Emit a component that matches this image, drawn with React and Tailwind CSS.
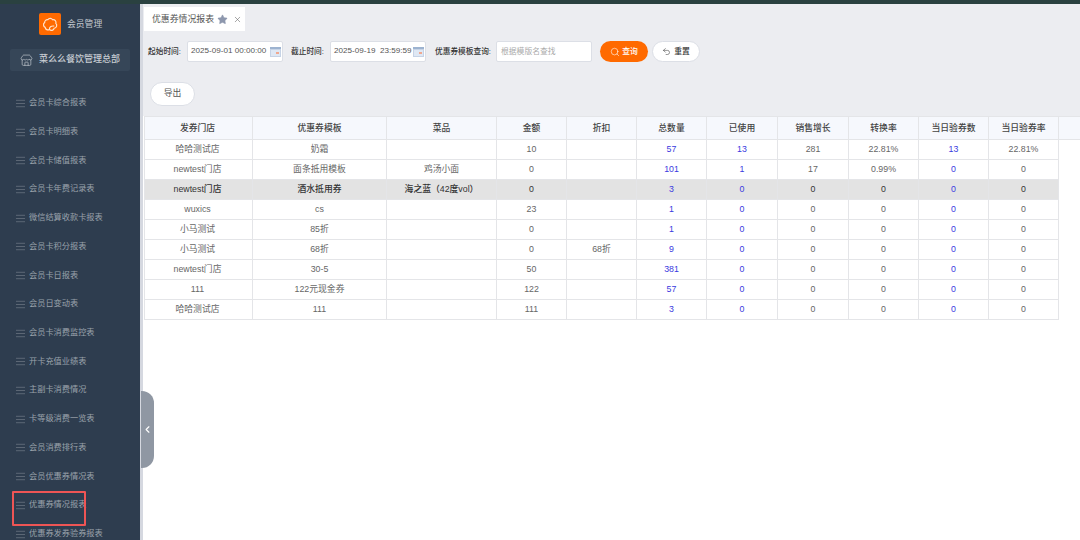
import React from "react";
import { Store, Search, Undo2, X, Star, AlignJustify, ChevronLeft } from "lucide-react";

const FONT = "font-['Liberation_Sans','Noto_Sans_CJK_SC',sans-serif]";

const menuItems = [
  "会员卡综合报表",
  "会员卡明细表",
  "会员卡储值报表",
  "会员卡年费记录表",
  "微信结算收款卡报表",
  "会员卡积分报表",
  "会员卡日报表",
  "会员日变动表",
  "会员卡消费监控表",
  "开卡充值业绩表",
  "主副卡消费情况",
  "卡等级消费一览表",
  "会员消费排行表",
  "会员优惠券情况表",
  "优惠券情况报表",
  "优惠券发券验券报表",
];

const columns = [
  { label: "发券门店", width: "w-[108px]" },
  { label: "优惠券模板", width: "w-[134px]" },
  { label: "菜品", width: "w-[110px]" },
  { label: "金额", width: "w-[70px]" },
  { label: "折扣", width: "w-[70px]" },
  { label: "总数量", width: "w-[70px]" },
  { label: "已使用", width: "w-[71px]" },
  { label: "销售增长", width: "w-[71px]" },
  { label: "转换率", width: "w-[70px]" },
  { label: "当日验券数", width: "w-[70px]" },
  { label: "当日验券率", width: "w-[70px]" },
];

const rows = [
  ["哈哈测试店", "奶霜", "", "10", "", "57", "13", "281", "22.81%", "13", "22.81%"],
  ["newtest门店", "面条抵用模板", "鸡汤小面", "0", "", "101", "1", "17", "0.99%", "0", "0"],
  ["newtest门店", "酒水抵用券", "海之蓝（42度vol）", "0", "", "3", "0", "0", "0", "0", "0"],
  ["wuxics", "cs", "", "23", "", "1", "0", "0", "0", "0", "0"],
  ["小马测试", "85折", "", "0", "", "1", "0", "0", "0", "0", "0"],
  ["小马测试", "68折", "", "0", "68折", "9", "0", "0", "0", "0", "0"],
  ["newtest门店", "30-5", "", "50", "", "381", "0", "0", "0", "0", "0"],
  ["111", "122元现金券", "", "122", "", "57", "0", "0", "0", "0", "0"],
  ["哈哈测试店", "111", "", "111", "", "3", "0", "0", "0", "0", "0"],
];

const linkCols = [5, 6, 9];

const Logo = () => (
  <div className="w-[22px] h-[22px] rounded-[2px] bg-[#ff6a00] flex items-center justify-center">
    <svg width="17" height="17" viewBox="0 0 16 16" fill="none" stroke="#ffe3cc" strokeWidth="1.1">
      <path d="M5.500 3.500a2.600 2.600 0 0 1 4.500 0a2.600 2.600 0 0 1 3 3.500a2.600 2.600 0 0 1-1.500 4.500a2.600 2.600 0 0 1-4.500 1.200a2.600 2.600 0 0 1-4-2a2.600 2.600 0 0 1-.5-4.500a2.600 2.600 0 0 1 3-2.700z" />
      <path d="M7 12.700c-.3-2 1.500-3.700 4.500-3.200" />
    </svg>
  </div>
);

const CalendarIcon = () => (
  <svg width="11" height="10" viewBox="0 0 11 10" className="shrink-0">
    <rect width="11" height="10" fill="#c6d3e6" />
    <rect width="11" height="2" fill="#9db3d0" />
    <rect x="1" y="3" width="9" height="6" fill="#dfe8f4" />
    <rect x="6" y="5" width="3" height="2" fill="#f0a890" />
  </svg>
);

const Sidebar = () => (
  <aside className="w-[140px] shrink-0 bg-[#2e3d4f] flex flex-col overflow-hidden">
    <div className="flex items-start pl-[39px] gap-[6px] pt-[9px] h-[45px] shrink-0">
      <Logo />
      <span className="text-[8.800px] leading-[22px] text-[#c3c8ce]">会员管理</span>
    </div>
    <div className="mx-[10px] h-[22px] rounded-[2px] bg-[#364658] flex items-center pl-[10px] gap-[6px] shrink-0">
      <Store size={13} strokeWidth={1.200} className="text-[#c8cdd3]" />
      <span className="text-[9px] font-medium text-[#c8cdd3]">菜么么餐饮管理总部</span>
    </div>
    <ul className="pt-[18px]">
      {menuItems.map((item) => (
        <li key={item} className="h-[28.730px] flex items-center pl-[15px] gap-[3px] text-[8.200px] text-[#9aa2ab] whitespace-nowrap">
          <AlignJustify size={11} strokeWidth={1.100} className="text-[#8a929c] shrink-0" />
          <span>{item}</span>
        </li>
      ))}
    </ul>
  </aside>
);

const DateInput = ({ value }) => (
  <div className="w-[96px] h-[21px] bg-white border border-[#dcdfe6] rounded-[2px] flex items-center justify-between pl-[3px] pr-[1px] text-[8.100px] font-normal text-[#555]">
    <span className="whitespace-pre">{value}</span>
    <CalendarIcon />
  </div>
);

const Filters = () => (
  <div className="flex items-center h-[21px] mt-[10px] pl-[4px] text-[7.700px] text-[#333] font-medium whitespace-nowrap">
    <span className="w-[39px]">起始时间:</span>
    <DateInput value="2025-09-01 00:00:00" />
    <span className="ml-[8px] w-[39px]">截止时间:</span>
    <DateInput value="2025-09-19  23:59:59" />
    <span className="ml-[9px] w-[61px]">优惠券模板查询:</span>
    <div className="w-[96px] h-[21px] bg-white border border-[#dcdfe6] rounded-[2px] flex items-center pl-[4px] text-[7.800px] font-normal text-[#aaa]">
      根据模版名查找
    </div>
    <button className="ml-[8px] w-[48px] h-[21px] rounded-full bg-[#ff6a00] text-white flex items-center justify-center gap-[2px] text-[7.800px]">
      <Search size={10} strokeWidth={1.400} />
      查询
    </button>
    <button className="ml-[4px] w-[48px] h-[21px] rounded-full bg-white border border-[#dcdfe6] text-[#333] flex items-center justify-center gap-[3px] text-[7.800px]">
      <Undo2 size={9} strokeWidth={1.400} />
      重置
    </button>
  </div>
);

const ReportTable = () => (
  <table className="table-fixed border-collapse w-[936px] text-[8.800px] text-center">
    <thead>
      <tr className="h-[23px] bg-[#f6f8fd]">
        {columns.map((col, j) => (
          <th key={col.label} className={`${col.width} border border-[#e4e5e8] font-medium text-[#444] p-0 pt-px ${j === 0 ? "pr-[2px]" : ""}`}>
            {col.label}
          </th>
        ))}
        <th className="border-y border-[#e4e5e8] p-0" />
      </tr>
    </thead>
    <tbody>
      {rows.map((row, i) => (
        <tr key={i} className={i === 2 ? "h-[20px] bg-[#e3e3e3] font-medium" : "h-[20px]"}>
          {row.map((cell, j) => (
            <td
              key={j}
              className={`border border-[#e4e5e8] p-0 pt-px whitespace-nowrap ${j === 0 ? "pr-[2px]" : ""} ${
                linkCols.includes(j) ? "text-[#3a3ae0]" : i === 2 ? "text-[#333]" : "text-[#666]"
              }`}
            >
              {cell}
            </td>
          ))}
        </tr>
      ))}
    </tbody>
  </table>
);

export default function App() {
  return (
    <div className={`${FONT} relative w-[1080px] h-[540px] overflow-hidden flex flex-col bg-white`}>
      <div className="h-[4px] bg-[#2a4140] shrink-0" />
      <div className="flex flex-1 min-h-0">
        <Sidebar />
        <main className="flex-1 min-w-0 border-l-[3px] border-[#d5d8e0] flex flex-col">
          <div className="h-[112px] bg-[#ecedf1] pl-px shrink-0">
            <div className="flex mt-[3px] w-[101px] h-[24px] bg-white items-center pl-[8px] pt-px text-[8.900px] text-[#555] whitespace-nowrap">
              <span>优惠券情况报表</span>
              <Star size={11} fill="#8d97ad" strokeWidth={1} className="text-[#8d97ad] ml-[3px]" />
              <X size={9} strokeWidth={1.500} className="text-[#666] ml-[5px]" />
            </div>
            <Filters />
            <button className="block mt-[20px] ml-[6px] w-[45px] h-[24px] rounded-full bg-white border border-[#dcdfe6] text-[8.800px] text-[#555]">
              导出
            </button>
          </div>
          <div className="pl-px">
            <ReportTable />
          </div>
        </main>
      </div>

      <div className="absolute left-[141px] top-[391px] w-[13px] h-[77px] rounded-r-[12px] bg-[#8f97a3] flex items-center justify-center">
        <ChevronLeft size={11} strokeWidth={2.500} className="text-white" />
      </div>
      <div className="absolute left-[12px] top-[491px] w-[74px] h-[35px] border-2 border-[#ee5555] rounded-[1px]" />
    </div>
  );
}
